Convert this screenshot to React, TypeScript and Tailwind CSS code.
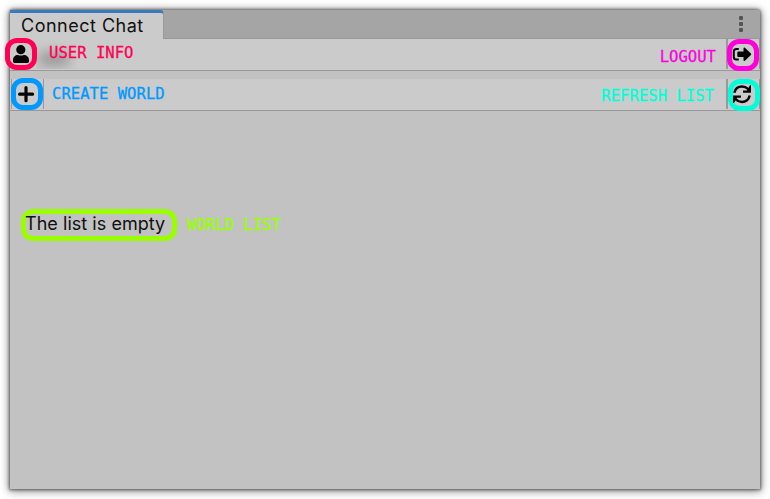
import React from 'react';

const mono = "whitespace-nowrap font-['DejaVu_Sans_Mono',monospace] text-[15.6px] leading-5 [-webkit-text-stroke:0.3px_currentColor]";

function Ring({ className, children }: { className: string; children?: React.ReactNode }) {
  return (
    <div className={`absolute h-8 w-8 rounded-[12px] border-[5px] text-[#050505] ${className}`}>
      <svg width="22" height="22" viewBox="0 0 22 22" fill="none" stroke="currentColor">{children}</svg>
    </div>
  );
}

function UserIcon() {
  return (
    <g fill="currentColor" stroke="none">
      <circle cx="10.8" cy="6.7" r="4.6" />
      <path d="M3 18.2V17c0-3 2.2-5 5-5 1.7.8 4 .8 5.7 0 2.900 0 5.300 2 5.300 5v1.200c0 1-.7 1.700-1.700 1.700H4.700c-1 0-1.700-.7-1.700-1.700Z" />
    </g>
  );
}

function LogoutIcon() {
  return (
    <>
      <path strokeWidth="2" d="M8 5.800H5.500Q3 5.800 3 8.300v5.400q0 2.500 2.500 2.500H8" />
      <path fill="currentColor" stroke="none" d="M7.500 8.200h5.200V5c0-.8.8-1.100 1.400-.5l6 5.800c.4.400.4 1 0 1.400l-6 5.800c-.6.600-1.400.3-1.400-.5v-3.300H7.500Q6.500 13.700 6.500 12.700V9.200q0-1 1-1Z" />
    </>
  );
}

function RefreshIcon() {
  return (
    <>
      <path strokeWidth="2.500" d="M1.300 8.800C2.200 4.800 5.400 2.400 9 2.400c2.500 0 4.600 1 6.100 2.600L17 7M16.700 11.500c-.8 3.900-4 6.400-7.700 6.400-2.500 0-4.600-1-6.100-2.600L1 13.300" />
      <path fill="currentColor" stroke="none" d="M18 1.300v7.400h-8V6.500h3.900L17 1.300ZM0 19v-7.400h8v2.200H4.100L1 19Z" />
    </>
  );
}

export default function App() {
  return (
    <div className="h-[499px] w-[770px] overflow-hidden bg-white p-[10px] font-['Inter',sans-serif]">
      <main className="flex h-[479px] w-[750px] flex-col rounded-t-[3px] bg-[#c2c2c2] shadow-[0_0_3px_1px_rgba(0,0,0,0.45),0_1px_8px_1px_rgba(0,0,0,0.5)]">
        <header className="flex h-[29px] shrink-0 items-stretch justify-between rounded-t-[3px] border-b border-[#999999] bg-[#a5a5a5]">
          <div className="-mb-px w-[153.5px] rounded-tr-[4px] border-t-[3px] border-r border-t-[#3a79bb] border-r-[#999999] bg-[#cbcbcb] pl-[11px]">
            <h1 className="text-[18px] leading-[26px] tracking-[0.5px] whitespace-nowrap text-[#101010]">Connect Chat</h1>
          </div>
          <div className="mr-[17px] flex flex-col items-center justify-center gap-[2px]">
            <i className="size-1 rounded-[1px] bg-[#555]" />
            <i className="size-1 rounded-[1px] bg-[#555]" />
            <i className="size-1 rounded-[1px] bg-[#555]" />
          </div>
        </header>

        <section className="relative h-8 shrink-0 border-b border-[#999999] bg-[#cbcbcb]">
          <div className="absolute top-0 left-[26px] h-[30px] w-[42px] overflow-hidden">
            <div className="absolute top-[13px] left-[2px] h-[14px] w-[32px] rounded-full bg-[#989898] blur-[6px]" />
          </div>
          <Ring className="top-[-1px] left-[-5px] border-[#ff0055]"><UserIcon /></Ring>
          <span className={`${mono} absolute top-1 left-[39px] text-[#ff0055]`}>USER INFO</span>
          <span className={`${mono} absolute top-2 right-[44px] text-[#f705dc]`}>LOGOUT</span>
          <div className="absolute top-0 right-0 h-[30px] w-[34px] border-r border-l-2 border-[#999999]" />
          <Ring className="top-0 right-[1px] border-[#ff00dd]"><g transform="translate(-1.200 -.7)"><LogoutIcon /></g></Ring>
        </section>

        <section className="relative mt-2 h-8 shrink-0 border-b border-[#999999] bg-[#cbcbcb]">
          <div className="absolute top-0 left-[1px] h-[30px] w-[33px] border-x border-[#999999]" />
          <Ring className="top-[-1px] left-[1px] border-[#0099ff]"><path strokeWidth="3.200" strokeLinecap="round" d="M3.600 11.200h13M10 4.500v13.200" /></Ring>
          <span className={`${mono} absolute top-[5px] left-[42px] text-[#0099ff]`}>CREATE WORLD</span>
          <span className={`${mono} absolute top-[7px] right-[46px] text-[#00ffd9]`}>REFRESH LIST</span>
          <div className="absolute top-0 right-0 h-[30px] w-[34px] border-r border-l-2 border-[#999999]" />
          <Ring className="top-0 right-0 border-[#00ffd9]"><RefreshIcon /></Ring>
        </section>

        <section className="flex items-center pt-[98px] pl-[11px]">
          <div className="h-8 w-[156px] rounded-[12px] border-[5px] border-[#99ff00]">
            <p className="-mt-px -ml-px text-[18px] leading-[21px] tracking-[0.04px] whitespace-nowrap text-[#101010]">The list is empty</p>
          </div>
          <span className={`${mono} ml-[10px] text-[#99ff00]`}>WORLD LIST</span>
        </section>
      </main>
    </div>
  );
}
